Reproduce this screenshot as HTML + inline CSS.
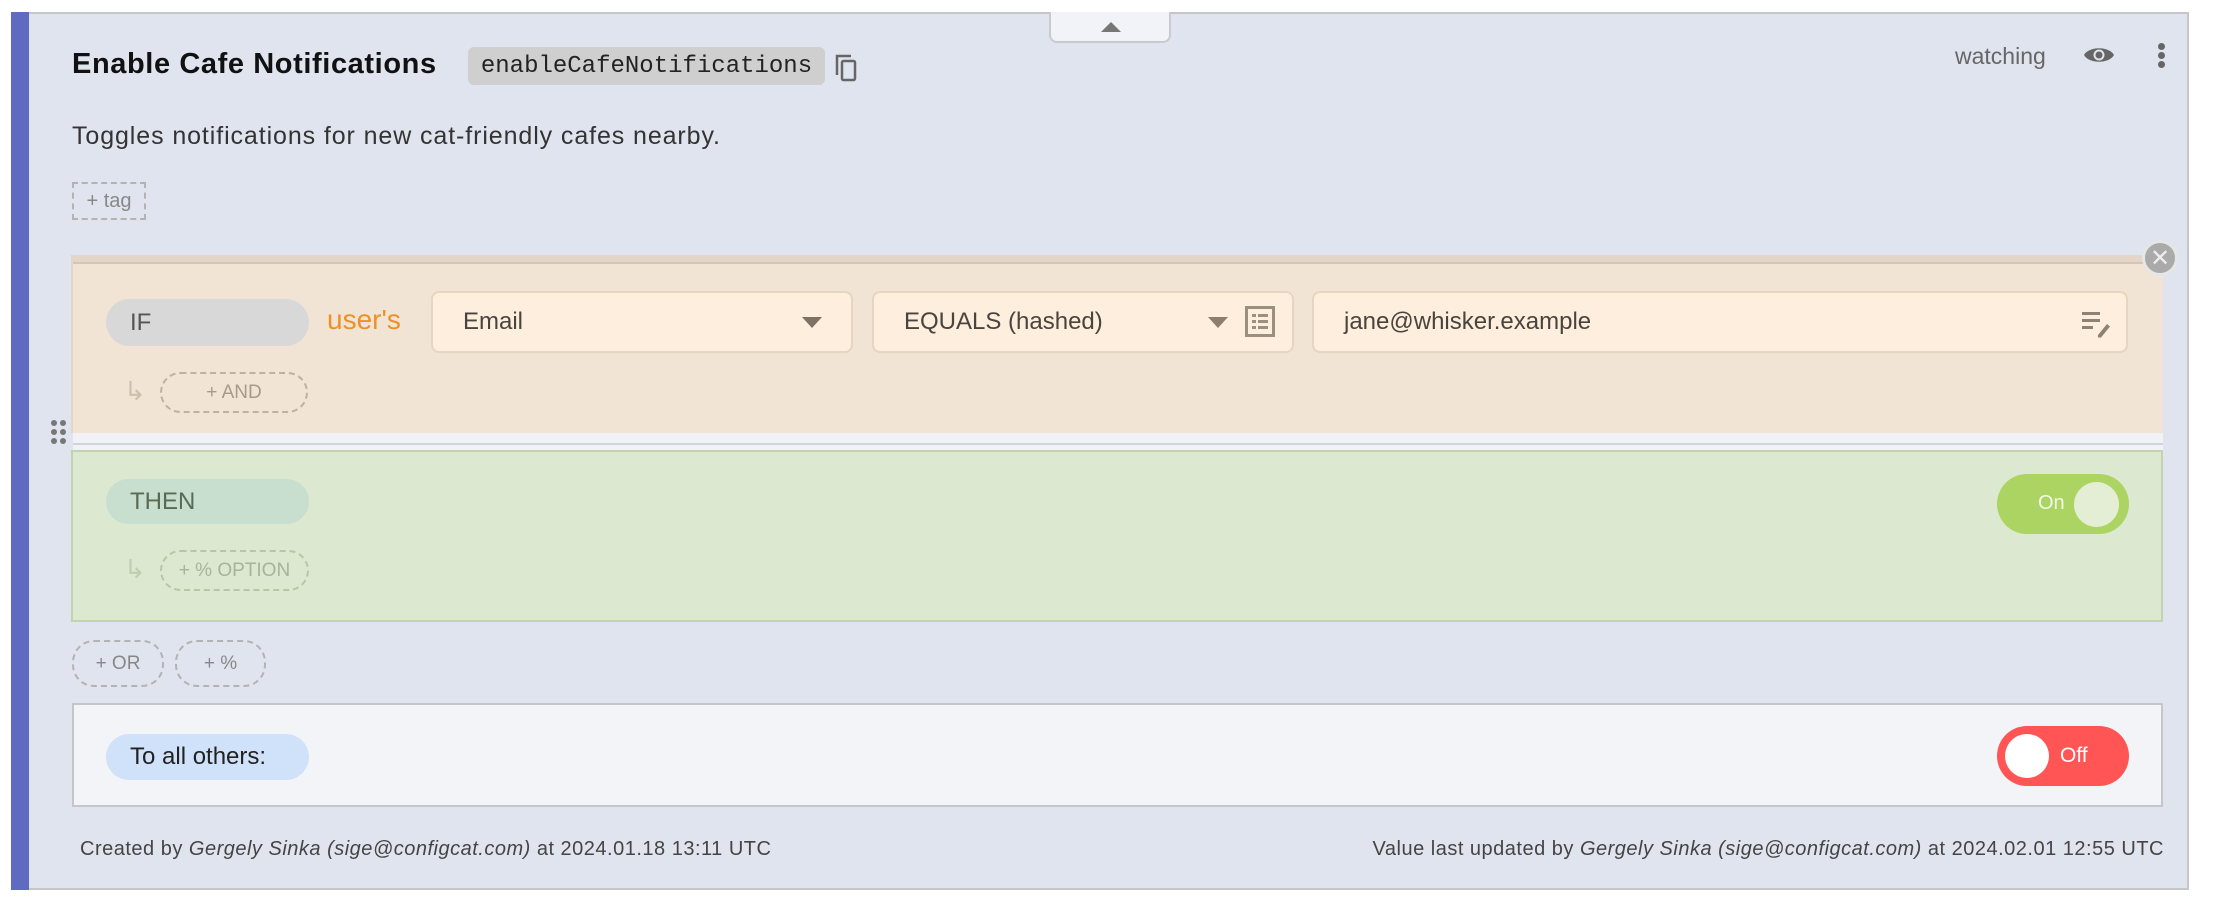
<!DOCTYPE html>
<html><head><meta charset="utf-8"><style>
*{box-sizing:border-box;margin:0;padding:0}
body{width:2220px;height:900px;background:#fff;font-family:"Liberation Sans",sans-serif;position:relative;overflow:hidden}
.a{position:absolute}
.card{left:11px;top:12px;width:2178px;height:878px;background:#dfe4ef;border:2px solid #c6c6c8;border-left:none}
.bar{left:11px;top:12px;width:18px;height:878px;background:#5e6bc1}
.pill{position:absolute;border-radius:24px;font-size:24px;display:flex;align-items:center;padding-left:24px}
.dash{position:absolute;border:2px dashed #b3b3b3;border-radius:22px;font-size:19px;color:#9a9a9a;display:flex;align-items:center;justify-content:center}
.sel{position:absolute;background:#fdeedd;border:2px solid #e6d5c0;border-radius:8px;font-size:24px;color:#4a443e;display:flex;align-items:center;padding-left:30px}
</style></head><body>
<div class="a card"></div>
<div class="a bar"></div>
<div class="a" style="left:1049px;top:12px;width:122px;height:31px;background:#f1f3f8;border:2px solid #c8cad0;border-top:none;border-radius:0 0 8px 8px"></div>
<div class="a" style="left:1101px;top:22px;width:0;height:0;border-left:10px solid transparent;border-right:10px solid transparent;border-bottom:10px solid #777"></div>

<div class="a" style="left:72px;top:48px;font-size:29px;font-weight:bold;color:#111;letter-spacing:0.6px">Enable Cafe Notifications</div>
<div class="a" style="left:468px;top:47px;width:357px;height:38px;background:#cfcfcf;border-radius:6px;font-family:'Liberation Mono',monospace;font-size:24px;color:#222;display:flex;align-items:center;justify-content:center">enableCafeNotifications</div>
<svg class="a" style="left:834px;top:53px" width="26" height="30" viewBox="0 0 26 30"><path d="M3 22V3h14" fill="none" stroke="#666" stroke-width="2.5"/><rect x="8" y="8" width="13" height="19" rx="1.5" fill="none" stroke="#666" stroke-width="2.5"/></svg>

<div class="a" style="left:1955px;top:43px;font-size:23px;color:#666">watching</div>
<svg class="a" style="left:2083px;top:44px" width="32" height="22" viewBox="0 0 32 22"><path d="M1 11C6 2 26 2 31 11C26 20 6 20 1 11Z" fill="#666"/><circle cx="16" cy="11" r="5.5" fill="#dfe4ef"/><circle cx="16" cy="11" r="3.5" fill="#666"/></svg>
<div class="a" style="left:2158px;top:43px;width:7px;height:7px;border-radius:50%;background:#666;box-shadow:0 9px 0 #666,0 18px 0 #666"></div>

<div class="a" style="left:72px;top:122px;font-size:25px;color:#333;letter-spacing:0.9px">Toggles notifications for new cat-friendly cafes nearby.</div>
<div class="a" style="left:72px;top:182px;width:74px;height:38px;border:2px dashed #b3b3b3;font-size:20px;color:#888;display:flex;align-items:center;justify-content:center">+ tag</div>

<div class="a" style="left:71px;top:255px;width:2092px;height:178px;background:#f2e4d5;border-top:7px solid #e3d6c8;border-left:2px solid #e3d6c8"></div>
<div class="a" style="left:73px;top:262px;width:2090px;height:2px;background:#d4c5b4"></div>
<div class="pill" style="left:106px;top:299px;width:203px;height:47px;background:#d8d8d8;color:#555">IF</div>
<div class="a" style="left:327px;top:304px;font-size:28px;color:#ec9126">user's</div>
<div class="sel" style="left:431px;top:291px;width:422px;height:62px">Email</div>
<div class="a" style="left:802px;top:317px;border-left:10px solid transparent;border-right:10px solid transparent;border-top:11px solid #7d7263"></div>
<div class="sel" style="left:872px;top:291px;width:422px;height:62px">EQUALS (hashed)</div>
<div class="a" style="left:1208px;top:317px;border-left:10px solid transparent;border-right:10px solid transparent;border-top:11px solid #8c7f6e"></div>
<svg class="a" style="left:1245px;top:306px" width="30" height="31" viewBox="0 0 30 31"><rect x="1.5" y="1.5" width="27" height="28" fill="none" stroke="#9b8f7f" stroke-width="3"/><g fill="#9b8f7f"><rect x="7" y="8" width="4" height="3"/><rect x="13" y="8" width="10" height="3"/><rect x="7" y="14" width="4" height="3"/><rect x="13" y="14" width="10" height="3"/><rect x="7" y="20" width="4" height="3"/><rect x="13" y="20" width="10" height="3"/></g></svg>
<div class="sel" style="left:1312px;top:291px;width:816px;height:62px">jane@whisker.example</div>
<svg class="a" style="left:2080px;top:310px" width="34" height="28" viewBox="0 0 34 28"><g fill="#8c8275"><rect x="2" y="2" width="18" height="3"/><rect x="2" y="9" width="18" height="3"/><rect x="2" y="16" width="11" height="3"/><path d="M18 25l9-11 3 2.5-9 11h-3z"/></g></svg>
<div class="a" style="left:2142px;top:240px;width:36px;height:36px;border-radius:50%;background:#aaa;border:3px solid #e6e6e6;color:#eee;font-size:24px;display:flex;align-items:center;justify-content:center">✕</div>
<div class="a" style="left:124px;top:376px;font-size:26px;color:#cdbfae">↳</div>
<div class="dash" style="left:160px;top:372px;width:148px;height:41px;border-color:#bfb1a0;color:#a89a8a">+ AND</div>

<div class="a" style="left:51px;top:420px;width:6px;height:6px;border-radius:50%;background:#777;box-shadow:9px 0 0 #777,0 9px 0 #777,9px 9px 0 #777,0 18px 0 #777,9px 18px 0 #777"></div>

<div class="a" style="left:73px;top:433px;width:2090px;height:18px;background:#f0f2f6"></div>
<div class="a" style="left:73px;top:443px;width:2090px;height:2px;background:#cfd3da"></div>

<div class="a" style="left:71px;top:450px;width:2092px;height:172px;background:#dce8cf;border:2px solid #c2d3b0"></div>
<div class="pill" style="left:106px;top:479px;width:203px;height:45px;background:#c8dfd0;color:#5a6a55">THEN</div>
<div class="a" style="left:1997px;top:474px;width:132px;height:60px;border-radius:30px;background:#abd462"></div>
<div class="a" style="left:2038px;top:492px;font-size:20px;color:#f4f9ea">On</div>
<div class="a" style="left:2074px;top:482px;width:45px;height:45px;border-radius:50%;background:#e3eed5"></div>
<div class="a" style="left:124px;top:554px;font-size:26px;color:#c0cdb2">↳</div>
<div class="dash" style="left:160px;top:550px;width:149px;height:41px;border-color:#b7c6a8;color:#a7b49b">+ % OPTION</div>

<div class="dash" style="left:72px;top:640px;width:92px;height:47px;color:#888">+ OR</div>
<div class="dash" style="left:175px;top:640px;width:91px;height:47px;color:#888">+ %</div>

<div class="a" style="left:72px;top:703px;width:2091px;height:104px;background:#f2f4f8;border:2px solid #c6c6c8"></div>
<div class="pill" style="left:106px;top:734px;width:203px;height:46px;background:#d0e2fa;color:#222">To all others:</div>
<div class="a" style="left:1997px;top:726px;width:132px;height:60px;border-radius:30px;background:#ff5555"></div>
<div class="a" style="left:2005px;top:734px;width:44px;height:44px;border-radius:50%;background:#fff"></div>
<div class="a" style="left:2060px;top:744px;font-size:21px;color:#fff">Off</div>

<div class="a" style="left:80px;top:838px;font-size:20px;color:#444;letter-spacing:0.5px">Created by <i>Gergely Sinka (sige@configcat.com)</i> at 2024.01.18 13:11 UTC</div>
<div class="a" style="right:56px;top:838px;font-size:20px;color:#444;letter-spacing:0.5px">Value last updated by <i>Gergely Sinka (sige@configcat.com)</i> at 2024.02.01 12:55 UTC</div>
</body></html>
